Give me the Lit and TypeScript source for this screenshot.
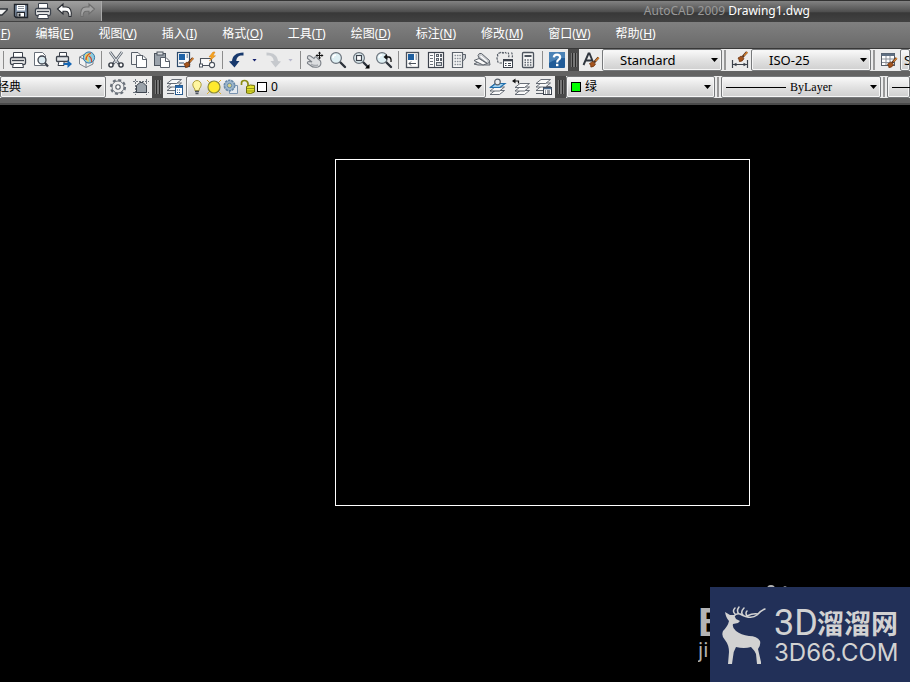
import { LitElement, html, svg, css, TemplateResult, SVGTemplateResult } from "lit";
import { customElement, property } from "lit/decorators.js";
import { classMap } from "lit/directives/class-map.js";

const INK = "#3c424c";

const layersStack = (y: number): SVGTemplateResult => svg`
  <g fill="#fafafa" stroke="#59606a" stroke-width=".9">
    <path d="M1 ${y + 9.5} L6 ${y + 5.5} H15.5 L10.5 ${y + 9.5} Z" />
    <path d="M1 ${y + 6} L6 ${y + 2} H15.5 L10.5 ${y + 6} Z" />
    <path d="M1 ${y + 2.5} L6 ${y - 1.5} H15.5 L10.5 ${y + 2.5} Z" />
  </g>`;

const printer = svg`
  <path d="M4.5 7V1.5H13.5V7" fill="#fff" stroke=${INK} />
  <rect x="1.5" y="6.5" width="15" height="7" rx="1.5" fill="#e8e8e8" stroke=${INK} stroke-width="1.3" />
  <path d="M3 9.5H15" stroke=${INK} stroke-width="1.3" />
  <path d="M4.5 12.5H13.5L14.5 16.5H3.5Z" fill="#fff" stroke=${INK} />`;

const magnifier = (cx: number): SVGTemplateResult => svg`
  <path d="M${cx + 4} 11L${cx + 9} 16" stroke="#2d333b" stroke-width="2.4" stroke-linecap="round" />
  <circle cx=${cx} cy="7" r="5.4" fill="#dff0f4" stroke="#6a727b" stroke-width="1.2" />
  <path d="M${cx - 3} 7A3 3 0 0 1 ${cx} 4" stroke="#fff" stroke-width="1.4" fill="none" />`;

const brush = (x: number, y: number): SVGTemplateResult => svg`
  <g transform="translate(${x} ${y})">
    <path d="M9 0L4.5 5" stroke="#5b331a" stroke-width="2.4" />
    <path d="M9.4 0L6 3.6" stroke="#e08a35" stroke-width="1.2" />
    <path d="M0 6Q2 5 3 4L6 6.4Q5 9.5 1.4 9.6Q1.6 8 0 6Z" fill="#a5541c" stroke="#6d3511" stroke-width=".8" />
  </g>`;

const icons: Record<string, SVGTemplateResult> = {
  open: svg`<path d="M4 13H12L18 7H9" fill="#f4f4f4" stroke="#30343a" stroke-width="1.3" />`,
  save: svg`
    <path d="M2.5 2.5H15.5V15.5H4L2.5 14Z" fill="#7e8ea3" stroke="#20242b" stroke-width="1.4" />
    <rect x="5" y="3" width="8" height="5.5" fill="#fff" />
    <path d="M6 4.5H12M6 6.5H12" stroke="#8b929b" />
    <rect x="5" y="10.5" width="7.5" height="4.5" fill="#fff" stroke="#20242b" />
    <rect x="6.5" y="11.5" width="2" height="3" fill="#20242b" />`,
  print: printer,
  undoLight: svg`<path d="M1.5 7L7 2V5H10C14.5 5 16 9 15 14.5L13 14.5C13 10.5 12 9.3 9.5 9.3H7V12Z" fill="#fff" stroke="#2a2d33" stroke-width="1.1" />`,
  redoDim: svg`<path d="M16.5 7L11 2V5H8C3.5 5 2 9 3 14.5L5 14.5C5 10.5 6 9.3 8.5 9.3H11V12Z" fill="#a2a2a2" stroke="#6e6e6e" stroke-width="1.1" />`,
  preview: svg`
    <path d="M2.5 1.5H10.5L13.5 4.5V14.5H2.5Z" fill="#fff" stroke="#69707a" />
    <circle cx="10" cy="9" r="4" fill="#dcebf2" stroke=${INK} stroke-width="1.3" />
    <path d="M13 12L16 15.5" stroke=${INK} stroke-width="2.2" />`,
  publish: svg`
    <path d="M4.5 6V1.5H11.5V6" fill="#fff" stroke=${INK} />
    <rect x="1.5" y="5.5" width="12" height="5" rx="1" fill="#e0e3e6" stroke=${INK} stroke-width="1.3" />
    <path d="M4 10.5H9V14.5H3Z" fill="#fff" stroke=${INK} />
    <path d="M8.5 12H12.5V9L17 13L12.5 17V14H8.5Z" fill="#1767b5" />`,
  dwf: svg`
    <path d="M1.5 6L8 2.5L15 6V13L8 16.5L1.5 13Z" fill="#f3f3f3" stroke="#7c828a" />
    <path d="M1.5 6L8 9.5V16.5" fill="none" stroke="#7c828a" />
    <circle cx="11" cy="6.5" r="5.6" fill="#8dcbe0" stroke="#3878a6" />
    <path d="M7 4Q10 1 13 3L10 6L11 11Q7 10 7 4Z" fill="#e9d45e" />
    <path d="M8 9Q8 4 13 2M11 5Q14 7 13.5 11" stroke="#d04a2c" fill="none" stroke-width="1.2" />`,
  cut: svg`
    <path d="M3 1L12 13M15 1L6 13" stroke="#555c66" stroke-width="2.6" />
    <path d="M3 1L11 12M15 1L7 12" stroke="#e6eaee" stroke-width="1.1" />
    <circle cx="4" cy="14" r="2.1" fill="#fff" stroke="#31363f" stroke-width="1.4" />
    <circle cx="14" cy="14" r="2.1" fill="#fff" stroke="#31363f" stroke-width="1.4" />`,
  copy: svg`
    <path d="M1.5 1.5H8L10.5 4V13.5H1.5Z" fill="#f2f2f2" stroke="#585f69" />
    <path d="M6.5 4.5H13L16.5 8V16.5H6.5Z" fill="#fff" stroke="#585f69" />
    <path d="M12.5 4.5V8.5H16.5" fill="none" stroke="#585f69" />`,
  paste: svg`
    <rect x="1.5" y="2.5" width="11" height="12" fill="#9ba3ac" stroke="#4d545e" />
    <rect x="4" y="1" width="6" height="3" fill="#dfe2e5" stroke="#4d545e" />
    <path d="M7.5 6.5H13L16.5 10V16.5H7.5Z" fill="#fff" stroke="#585f69" />
    <path d="M12.5 6.5V10.5H16.5" fill="none" stroke="#585f69" />`,
  match: svg`
    <rect x="1.5" y="1.5" width="12" height="14" fill="#fafafa" stroke="#2d4a6b" stroke-width="1.2" />
    <rect x="3" y="3" width="6" height="6" fill="#1d62a8" />
    <path d="M10.5 4H12M10.5 6H12M3 12H8" stroke="#2d4a6b" />
    ${brush(8, 7)}`,
  blockEdit: svg`
    <path d="M1.5 7.5H12.5V14.5H1.5Z" fill="#fafafa" stroke="#4c535d" stroke-width="1.1" />
    <rect x=".5" y="13" width="3" height="3" fill="#fff" stroke="#4c535d" />
    <circle cx="13" cy="14" r="2.6" fill="#fff" stroke="#4c535d" stroke-width="1.1" />
    <path d="M14 1L10 6H12.5L10.5 10L16.5 4.8H14L16 1Z" fill="#f7a51f" stroke="#d47b0c" stroke-width=".5" />`,
  undo: svg`<path d="M1 10.5L4 10C4.5 5 8 1.5 15.5 1.5V4.5C11 4 8.5 6 8.3 10H11.5L6.5 16.5Z" fill="#17396d" />`,
  redo: svg`<path d="M17 10.5L14 10C13.5 5 10 1.5 2.5 1.5V4.5C7 4 9.5 6 9.7 10H6.5L11.5 16.5Z" fill="#c6c9cd" />`,
  pan: svg`
    <path d="M1.5 6Q2 4 4.5 5L8 7.5L9 6Q11 5.5 11.5 7.5L14.5 10Q16 14.5 12 16Q7 17 4.5 14.5L1.5 12.5Q1 10.5 3 10.5L6 11L1.5 7.5Z" fill="#dcdee0" stroke="#7b8087" stroke-width="1.1" />
    <path d="M5 13Q8 15.5 12 14" stroke="#a5a9ae" stroke-width="1.4" />
    <path d="M13.5 1V8M10 4.5H17" stroke="#111" stroke-width="1.1" />
    <path d="M12 2.5L13.5 .5L15 2.5ZM12 6.5L13.5 8.5L15 6.5ZM11.5 3L9.5 4.5L11.5 6ZM15.5 3L17.5 4.5L15.5 6Z" fill="#111" />`,
  zoom: magnifier(7),
  zoomWindow: svg`${magnifier(7)}
    <rect x="4.5" y="4.5" width="5" height="5" fill="#fff" stroke=${INK} stroke-width="1.2" />
    <path d="M17.5 13V17.5H13Z" fill="#000" />`,
  zoomPrevious: svg`${magnifier(7)}
    <path d="M11 6H14Q16.5 6.5 16 11" fill="none" stroke="#111" stroke-width="1.3" />
    <path d="M8.5 6L12 3V9Z" fill="#111" />`,
  properties: svg`
    <rect x="2.5" y="1.5" width="12" height="15" fill="#fdfdfd" stroke="#4a515b" stroke-width="1.3" />
    <rect x="4" y="3" width="6" height="6" fill="#1f5f9f" />
    <path d="M11.5 4H13M11.5 6H13M11.5 8H13M5 12.5H12" stroke="#4a515b" />
    <path d="M7 10.5L5 12.5L7 14.5" fill="none" stroke="#4a515b" />`,
  designCenter: svg`
    <rect x="1.5" y="1.5" width="15" height="15" fill="#fdfdfd" stroke=${INK} stroke-width="1.2" />
    <path d="M7.5 2V16M3 4.5H6M3 7.5H6M3 10.5H6M3 13.5H6" stroke="#6b727b" />
    <g fill="#cfd3d7" stroke="#59606a">
      <rect x="9.5" y="3.5" width="2" height="2" /><rect x="13.5" y="3.5" width="1" height="2" />
      <rect x="9.5" y="7.5" width="2" height="2" /><rect x="13.5" y="7.5" width="1" height="2" />
      <rect x="9.5" y="11.5" width="5" height="3" />
    </g>`,
  palettes: svg`
    <path d="M2.5 1.5H12.5V16.5H2.5Z" fill="#f8f8f8" stroke="#5c636c" stroke-width="1.2" />
    <path d="M12.5 3.5H15.5V7L13.5 9.5H12.5Z" fill="#c9cdd1" stroke="#5c636c" />
    <path d="M4.5 4.5H11M4.5 7.5H11M4.5 10.5H11M4.5 13.5H11" stroke="#8b929a" stroke-width="1.6" stroke-dasharray="1.6 .8" />`,
  sheetSet: svg`
    <path d="M1 13L5 11H16.5L17 14H5Z" fill="#d6d8db" stroke="#5d636b" />
    <path d="M1 9.5L6 7.5L14 12.5L10 14Z" fill="#fafafa" stroke="#5d636b" />
    <path d="M5 4.5Q6 1.5 8.5 2.5L16.5 9.5Q17 12 14.5 12.5L6 7Z" fill="#c8cbcf" stroke="#5d636b" />
    <path d="M7.5 5L14 10.5" stroke="#fff" stroke-width="1.2" />`,
  markup: svg`
    <path d="M6 12H3.5Q1 11.5 2 9Q0 7.5 2 5.5Q.5 2.5 3.5 2Q5.5 .5 7 2.2Q9 .5 10.5 2.5" fill="none" stroke="#555c65" stroke-width="1.2" stroke-dasharray="2.5 1" />
    <path d="M12 1.5Q13.5 4 12.5 6.5M15.5 1.5Q17 4 16 7" fill="none" stroke="#555c65" stroke-width="1.2" stroke-dasharray="2 1" />
    <rect x="7.5" y="8.5" width="9" height="8" fill="#fff" stroke=${INK} />
    <path d="M7.5 9.5H16.5" stroke=${INK} stroke-width="1.6" />
    <path d="M9 12.5H10.5M12 12.5H15M9 14.5H10.5M12 14.5H15" stroke=${INK} />`,
  calculator: svg`
    <rect x="3.5" y="1.5" width="11" height="15" rx="1" fill="#f6f6f6" stroke="#4d545e" stroke-width="1.3" />
    <rect x="5.5" y="4" width="7" height="2" fill="#4d545e" />
    <path d="M5.5 9H13M5.5 11.5H13M5.5 14H13" stroke="#5d646e" stroke-width="1.3" stroke-dasharray="1.5 1.2" />`,
  gear: svg`
    <circle cx="9" cy="9" r="7" fill="none" stroke="#6a717a" stroke-width="2.2" stroke-dasharray="3 2.5" />
    <circle cx="9" cy="9" r="6" fill="#efefef" stroke="#6a717a" />
    <circle cx="9" cy="9" r="2.2" fill="#fff" stroke="#565d66" stroke-width="1.1" />`,
  workspace: svg`
    <path d="M1 3.5H17M1 14.5H17M3.5 1V17M14.5 1V17" stroke="#6d747d" stroke-dasharray="2 1" />
    <path d="M4.5 14.5V7.5L8 4.5H11L14.5 8V14.5Z" fill="#9aa2aa" stroke="#3f4650" />`,
  layerProps: svg`${layersStack(3)}
    <path d="M1 15.5H8" stroke="#59606a" />
    <rect x="9.5" y="7.5" width="7" height="9" fill="#fff" stroke="#2b5c8f" />
    <rect x="10" y="8" width="6" height="2" fill="#2b6cb0" />
    <path d="M11 12H15M11 14.5H15" stroke="#2b5c8f" stroke-dasharray="1 1" />`,
  layerCurrent: svg`${layersStack(7)}
    <path d="M1.5 9.5L6.5 5.5H16L11 9.5Z" fill="#9fd0ee" stroke="#1f6fae" stroke-width="1.2" />
    <circle cx="8.5" cy="4" r="2.8" fill="#e9edf0" stroke="#5b626b" stroke-width="1.2" />`,
  layerPrevious: svg`<g transform="translate(2 0)">${layersStack(7)}</g>
    <path d="M2 3H6.5V5.5" fill="none" stroke="#111" stroke-width="1.2" />
    <path d="M0 3L3.5 .5V5.5Z" fill="#111" />`,
  layerStates: svg`${layersStack(3)}
    <path d="M1 15.5H8" stroke="#59606a" />
    <rect x="8.5" y="9.5" width="8" height="7" fill="#fff" stroke=${INK} />
    <path d="M8.5 10.5H16.5" stroke="#4a6d93" stroke-width="1.6" />
    <path d="M10 13H11M12 13H15M10 15H11M12 15H15" stroke=${INK} />`,
  help: svg`
    <rect x="1" y="1" width="16" height="16" rx="1" fill="#215c98" />
    <path d="M1 1H17V7Q9 7 1 12Z" fill="#4a82b6" />
    <path d="M5.8 6.4Q6 3.6 9 3.6Q12.2 3.6 12.2 6.3Q12.2 7.8 10.4 8.9Q9.2 9.6 9.2 11.4" fill="none" stroke="#fff" stroke-width="2.2" />
    <rect x="8" y="12.8" width="2.4" height="2.4" fill="#fff" />`,
  textStyle: svg`
    <path d="M1.5 14L6.5 2.5H7.5L11 11M3.5 9.5H10" fill="none" stroke="#2f353d" stroke-width="1.9" />
    ${brush(7.5, 6.5)}`,
  dimStyle: svg`
    <path d="M1.5 9V17M16.5 9V17M2 13.5H16" stroke="#3b414a" stroke-width="1.2" />
    <path d="M2 13.5L5.5 11.8V15.2ZM16 13.5L12.5 11.8V15.2Z" fill="#3b414a" />
    ${brush(7, 1)}`,
  tableStyle: svg`
    <rect x="1.5" y="2.5" width="13" height="12" fill="#fff" stroke="#555c66" />
    <rect x="1.5" y="2.5" width="13" height="2.5" fill="#5f6f82" />
    <path d="M2 8H14M2 11.5H14M6 5V14M10 5V14" stroke="#8a9099" />
    ${brush(7.5, 7)}`,
};

const drawIcon = (name: string): TemplateResult =>
  html`<svg class="icon" viewBox="0 0 18 18" fill="none" aria-hidden="true">${icons[name]}</svg>`;

type Tool = { icon?: string; label?: string; kind?: "sep" | "drop"; dim?: boolean };
const sep: Tool = { kind: "sep" };
const tool = (icon: string, label: string): Tool => ({ icon, label });

const standardTools: Tool[] = [
  sep,
  tool("print", "打印"), tool("preview", "打印预览"), tool("publish", "发布"), tool("dwf", "三维 DWF"),
  sep,
  tool("cut", "剪切"), tool("copy", "复制"), tool("paste", "粘贴"), tool("match", "特性匹配"), tool("blockEdit", "块编辑器"),
  sep,
  tool("undo", "放弃"), { kind: "drop", label: "放弃列表" }, tool("redo", "重做"), { kind: "drop", label: "重做列表", dim: true },
  sep,
  tool("pan", "实时平移"), tool("zoom", "实时缩放"), tool("zoomWindow", "窗口缩放"), tool("zoomPrevious", "缩放上一个"),
  sep,
  tool("properties", "特性"), tool("designCenter", "设计中心"), tool("palettes", "工具选项板"),
  tool("sheetSet", "图纸集管理器"), tool("markup", "标记集管理器"), tool("calculator", "快速计算器"),
  sep,
  tool("help", "帮助"),
];

const quickTools: Tool[] = [
  tool("open", "打开"), tool("save", "保存"), tool("print", "打印"), tool("undoLight", "放弃"), tool("redoDim", "重做"),
];

const menus: [string, string][] = [
  ["文件", "F"], ["编辑", "E"], ["视图", "V"], ["插入", "I"], ["格式", "O"], ["工具", "T"],
  ["绘图", "D"], ["标注", "N"], ["修改", "M"], ["窗口", "W"], ["帮助", "H"],
];

@customElement("cad-combo")
class CadCombo extends LitElement {
  @property() value = "";
  @property() label = "";
  @property() look = "";

  static styles = css`
    :host { display: block; min-width: 0; }
    .box {
      display: flex; align-items: center; position: relative; box-sizing: border-box;
      height: 22px; border: 1px solid #77797b; border-radius: 2px;
      background: linear-gradient(#fafafa, #e2e2e2 50%, #cfcfcf); box-shadow: inset 0 0 0 1px #f6f6f6;
    }
    select {
      appearance: none; flex: 1; min-width: 0; height: 20px; padding: 0 16px 0 17px;
      border: 0; outline: 0; background: none; color: #000;
      font: 13px/20px "Noto Sans", "Noto Sans CJK SC", sans-serif;
    }
    .clipped select { padding-left: 0; font-size: 12px; margin-left: -4px; }
    .tight select { padding-left: 4px; font-size: 12px; }
    .serif select { padding-left: 4px; font: 12px/20px "Liberation Serif", serif; }
    .edge select { padding: 0 0 0 3px; }
    .arrow {
      position: absolute; right: 3px; top: 8px; width: 7px; height: 4px; background: #000;
      clip-path: polygon(0 0, 100% 0, 50% 100%); pointer-events: none;
    }
    .edge .arrow { display: none; }
  `;

  render() {
    return html`<div class=${classMap({ box: true, [this.look || "plain"]: true })}>
      <slot></slot>
      <select aria-label=${this.label}><option>${this.value}</option></select>
      <span class="arrow"></span>
    </div>`;
  }
}

@customElement("site-badge")
class SiteBadge extends LitElement {
  static styles = css`
    :host { display: block; }
    .back { position: relative; width: 212px; height: 98px; color: #b4b4b4; }
    .big, .small { position: absolute; left: 0; width: 12px; overflow: hidden; white-space: nowrap; }
    .big { top: 20px; font: bold 40px/36px "Liberation Sans", sans-serif; }
    .small { top: 52px; font: 20px/28px "Noto Sans", sans-serif; }
    .paw { position: absolute; left: 66px; top: 0; width: 30px; height: 6px; }
    .panel {
      position: absolute; right: 0; bottom: 0; display: flex; align-items: center; box-sizing: border-box;
      width: 200px; height: 95px; padding-left: 12px; background: #223058; color: #d2d2d2;
    }
    .deer { width: 44px; height: 58px; flex: none; }
    .words { margin-left: 8px; }
    .row { display: flex; align-items: center; height: 36px; white-space: nowrap; }
    .latin { width: 43px; font: 36px/36px Roboto, sans-serif; }
    .han { font: 700 27px/36px "Noto Sans CJK SC", sans-serif; }
    .site { font: 24px/24px Inter, sans-serif; white-space: nowrap; }
  `;

  render() {
    return html`<div class="back">
      <svg class="paw" viewBox="0 0 30 6"><ellipse cx="7" cy="5" rx="4" ry="4" fill="#b4b4b4" /><ellipse cx="21" cy="5" rx="2" ry="3" fill="#8a8a8a" /></svg>
      <span class="big">B</span>
      <span class="small">ji</span>
      <div class="panel">
        <svg class="deer" viewBox="0 0 44 58" aria-hidden="true">
          <path fill="#d2d2d2" d="M3 6L8 9L12 9L14 13L18 15L16 17L11 18Q10 22 14 25Q19 29 27 30Q35 30 38 35Q39 39 36 43L39 56V58H35L34 48Q33 45 29 41Q22 43 14 41Q11 46 11 51L10 58H6L7 46Q7 39 3 34Q-1 30 1 25Q6 20 7 15Q4 12 3 6Z" />
          <path fill="none" stroke="#d2d2d2" stroke-width="1.5" stroke-linecap="round" d="M12 10Q14 7 18 8Q29 14 35 9Q38 5 43 3M13 8Q10 5 13 2M17 8Q14 5 17 1M21 9Q18 6 22 2M25 10Q23 7 25 5M25 10Q31 7 36 8" />
        </svg>
        <div class="words">
          <div class="row"><span class="latin">3D</span><span class="han">溜溜网</span></div>
          <div class="site">3D66.COM</div>
        </div>
      </div>
    </div>`;
  }
}

@customElement("app-root")
class AppRoot extends LitElement {
  static styles = css`
    :host {
      display: flex; flex-direction: column; height: 100vh; overflow: hidden; position: relative;
      background: #000; font: 12px/16px "Noto Sans", "Noto Sans CJK SC", sans-serif;
    }
    button { border: 0; padding: 0; margin: 0; background: none; font: inherit; color: inherit; }
    .icon { display: block; width: 18px; height: 18px; }
    .title {
      display: flex; flex: none; height: 22px; overflow: hidden; border-top: 1px solid #333; box-sizing: border-box;
      background: linear-gradient(#828282, #4e4e4e 52%, #383838 56%, #424242);
    }
    .quick {
      display: flex; flex: none; width: 102px; height: 20px; box-sizing: border-box;
      border-right: 1px solid #aaa; background: linear-gradient(#a0a0a0, #6e6e6e);
    }
    .quick button { flex: none; display: grid; place-items: center; width: 22px; height: 19px; }
    .quick button:first-child { margin-left: -12px; }
    .name { flex: 1; padding-right: 100px; text-align: right; line-height: 20px; color: #999; white-space: pre; }
    .name b { font-weight: 400; color: #fff; }
    .menu {
      display: flex; flex: none; align-items: center; gap: 25px; height: 27px; overflow: hidden; box-sizing: border-box;
      border-bottom: 1px solid #383838; padding-bottom: 2px; background: linear-gradient(#808080, #6a6a6a);
      color: #fff; white-space: nowrap;
    }
    .menu button { flex: none; }
    .menu button:first-child { margin-left: -27px; }
    .bars { flex: none; display: grid; gap: 5px; height: 56px; box-sizing: border-box; align-content: start; background: #636363; border-bottom: 2px solid #4a4a4a; }
    .bar { display: flex; height: 22px; min-width: 0; }
    .panel { display: flex; flex: none; height: 22px; background: #ececec; }
    .rest { flex: 1; min-width: 0; overflow: hidden; }
    .tool { flex: none; display: grid; place-items: center; width: 23px; height: 22px; }
    .drop { flex: none; display: grid; place-items: center; width: 13px; height: 22px; }
    .drop::before { content: ""; width: 5px; height: 3px; background: #14206e; clip-path: polygon(0 0, 100% 0, 50% 100%); }
    .dim::before { background: #b9b9cc; }
    .sep { flex: none; width: 6px; height: 18px; margin: 2px 0; background: linear-gradient(#8c8c8c, #8c8c8c) 3px 0 / 1px 100% no-repeat; }
    .grip { flex: none; display: grid; place-items: center; width: 11px; background: #4a4a4a; }
    .grip::before { content: ""; width: 6px; height: 14px; background: radial-gradient(#000 35%, #777 36%) 0 0 / 3px 2px; }
    .twin { flex: none; width: 2px; height: 20px; margin: 1px 2px; border: solid #999; border-width: 0 1px; box-sizing: border-box; }
    .workspace { width: 106px; }
    .style { width: 120px; }
    .layer { width: 300px; }
    .color { width: 149px; }
    .line { width: 160px; }
    .last { flex: 1; min-width: 0; }
    .state { display: flex; flex: none; align-items: center; gap: 1px; padding-left: 2px; }
    .state svg { display: block; width: 16px; height: 16px; }
    .swatch { flex: none; width: 10px; height: 10px; box-sizing: border-box; border: 1px solid #000; background: #fff; }
    .green { background: #0f0; margin-left: 4px; }
    .rule { flex: none; width: 60px; height: 1px; margin-left: 4px; background: #000; }
    .canvas { flex: 1; min-height: 0; position: relative; overflow: hidden; background: #000; }
    .rect { position: absolute; left: 335px; top: 54px; width: 415px; height: 347px; box-sizing: border-box; border: 1px solid #fff; }
    site-badge { position: absolute; right: 0; bottom: 0; }
  `;

  private tool(t: Tool): TemplateResult {
    if (t.kind === "sep") return html`<span class="sep"></span>`;
    if (t.kind === "drop") return html`<button class=${classMap({ drop: true, dim: !!t.dim })} aria-label=${t.label}></button>`;
    return html`<button class="tool" aria-label=${t.label}>${drawIcon(t.icon!)}</button>`;
  }

  private layerState() {
    return html`<span class="state">
      <svg viewBox="0 0 16 16"><path d="M8 1.5A4.3 4.3 0 0 1 12.2 6Q12 8 10.2 10V11.5H5.8V10Q4 8 3.8 6A4.3 4.3 0 0 1 8 1.5Z" fill="#fff6a0" stroke="#b0a040" /><path d="M6 12.5H10M6.5 14.5H9.5" stroke="#4d535c" stroke-width="1.5" /></svg>
      <svg viewBox="0 0 16 16"><path d="M1 1L15 15M15 1L1 15" stroke="#e0b030" /><circle cx="8" cy="8" r="6" fill="#ffea2e" stroke="#8b8b3a" stroke-width="1.2" /></svg>
      <svg viewBox="0 0 16 16"><path d="M6.5 6.5H14.5V14.5H6.5Z" fill="#e4eaf0" stroke="#7b94b0" /><circle cx="6.5" cy="6.5" r="5.2" fill="#9cb6cc" stroke="#6688a8" stroke-width="1.6" stroke-dasharray="2.4 .8" /><circle cx="6.5" cy="6.5" r="2.2" fill="#d9d488" stroke="#6688a8" /></svg>
      <svg viewBox="0 0 16 16"><path d="M1.5 6V4Q1.5 1.5 4.5 1.5T8 4.5V7" fill="none" stroke="#8c8c14" stroke-width="1.7" /><path d="M6.5 7.5Q10 5 14.5 6.5V13Q11 15.5 6.5 14Z" fill="#e2e22a" stroke="#70700f" /><path d="M7 9.5H14M7 12H14" stroke="#9a9a18" /></svg>
      <span class="swatch"></span>
    </span>`;
  }

  render() {
    return html`
      <header class="title">
        <div class="quick">${quickTools.map((t) => html`<button aria-label=${t.label}>${drawIcon(t.icon!)}</button>`)}</div>
        <div class="name">AutoCAD 2009 <b>Drawing1.dwg</b></div>
      </header>
      <nav class="menu">${menus.map(([text, key]) => html`<button>${text}(<u>${key}</u>)</button>`)}</nav>
      <div class="bars">
        <div class="bar">
          <div class="panel">${standardTools.map((t) => this.tool(t))}</div>
          <span class="grip"></span>
          <div class="panel rest">
            <button class="tool" aria-label="文字样式">${drawIcon("textStyle")}</button>
            <cad-combo class="style" label="文字样式" value="Standard"></cad-combo>
            <span class="twin"></span>
            <button class="tool" aria-label="标注样式">${drawIcon("dimStyle")}</button>
            <cad-combo class="style" label="标注样式" value="ISO-25"></cad-combo>
            <span class="twin"></span>
            <button class="tool" aria-label="表格样式">${drawIcon("tableStyle")}</button>
            <cad-combo class="last" look="edge" label="表格样式" value="Standard"></cad-combo>
          </div>
        </div>
        <div class="bar">
          <div class="panel">
            <cad-combo class="workspace" look="clipped" label="工作空间" value="经典"></cad-combo>
            <button class="tool" aria-label="工作空间设置">${drawIcon("gear")}</button>
            <button class="tool" aria-label="我的工作空间">${drawIcon("workspace")}</button>
          </div>
          <span class="grip"></span>
          <div class="panel">
            <button class="tool" aria-label="图层特性管理器">${drawIcon("layerProps")}</button>
            <cad-combo class="layer" look="tight" label="图层" value="0">${this.layerState()}</cad-combo>
            <button class="tool" aria-label="置为当前图层">${drawIcon("layerCurrent")}</button>
            <button class="tool" aria-label="上一个图层">${drawIcon("layerPrevious")}</button>
            <button class="tool" aria-label="图层状态管理器">${drawIcon("layerStates")}</button>
          </div>
          <span class="grip"></span>
          <div class="panel rest">
            <cad-combo class="color" look="tight" label="颜色" value="绿"><span class="swatch green"></span></cad-combo>
            <span class="twin"></span>
            <cad-combo class="line" look="serif" label="线型" value="ByLayer"><span class="rule"></span></cad-combo>
            <span class="twin"></span>
            <cad-combo class="last" look="edge" label="线宽" value=""><span class="rule"></span></cad-combo>
          </div>
        </div>
      </div>
      <main class="canvas">
        <div class="rect"></div>
        <site-badge></site-badge>
      </main>`;
  }
}
